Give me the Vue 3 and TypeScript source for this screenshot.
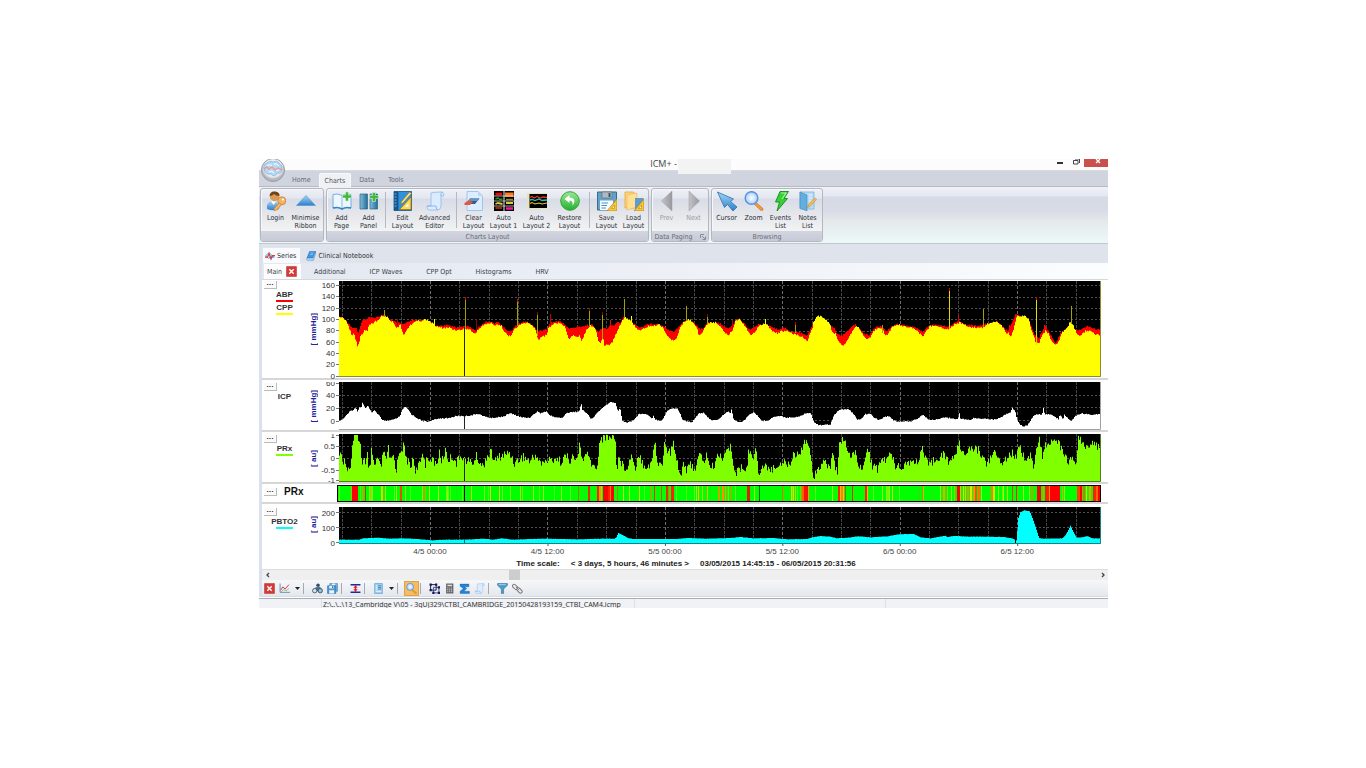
<script setup lang="ts">
type Point = [number, number]
interface Tick { label: string; y: number }
interface Spike { x: number; y: number; base: number; color: string; tip?: string }
interface RibbonButton { id: string; label: string; size: string; off?: boolean }
interface RibbonGroup { caption: string; launcher?: boolean; items: (RibbonButton | null)[] }

const PLOT_W = 762
/* Traces are stored in three sections, on a grid of one third of a unit. */
const SECTION_START = [-83, 201, 481]

function parse(sections: string[], shift: number): Point[] {
  const out: Point[] = []
  sections.forEach((s, i) => {
    for (const pair of s.trim().split(/\s+/)) {
      const [a, b] = pair.split(',').map(Number)
      const x = a / 3 + SECTION_START[i]
      if (out.length && x <= out[out.length - 1][0]) continue
      out.push([x, b / 3 + shift])
    }
  })
  return out
}

function noise(n: number): number {
  const v = Math.sin(n * 12.9898) * 43758.5453
  return (v - Math.floor(v)) * 2 - 1
}

function area(points: Point[], bottom: number, jitter: number, seed: number): string {
  let d = `M0 ${bottom}`
  let k = 0
  for (let x = 0; x <= PLOT_W; x++) {
    while (k < points.length - 2 && points[k + 1][0] < x) k++
    const [x0, y0] = points[k]
    const [x1, y1] = points[k + 1]
    const t = Math.min(1, Math.max(0, (x - x0) / (x1 - x0)))
    const y = Math.max(1, y0 + (y1 - y0) * t + noise(x + seed) * jitter)
    d += `V${y.toFixed(1)}H${x + 1}`
  }
  return d + `V${bottom}Z`
}

const cpp = parse([
  '250,125 258,122 265,130 275,148 283,168 286,183 292,168 296,188 300,195 304,213 308,200 312,182 320,172 325,160 332,165 340,142 348,145 356,136 365,134 372,122 385,118 392,122 400,132 412,140 420,155 432,148 437,165 442,175 450,165 458,150 468,145 475,135 485,134 495,135 505,130 515,132 525,140 540,152 560,156 580,155 590,160 605,163 625,158 640,160 650,170 655,175 665,160 680,148 695,142 705,142 712,148 722,145 735,150 745,168 755,180 762,180 770,165 785,150 800,142 812,140 825,148 835,155 843,185 848,193 852,182 870,178',
  '0,178 8,175 14,180 20,170 25,155 40,143 55,140 70,148 78,165 85,188 95,180 100,178 110,182 118,178 124,195 130,180 138,160 150,148 162,155 168,170 175,198 182,200 186,175 192,207 205,207 215,200 222,185 230,165 237,150 245,135 253,122 262,128 272,138 282,148 292,160 300,165 310,158 325,150 340,150 355,145 368,155 378,175 388,188 398,195 408,185 420,155 430,138 445,130 460,140 470,158 475,178 485,170 497,148 510,138 525,140 540,150 555,172 563,178 575,165 585,135 595,128 605,138 615,152 625,168 632,180 645,165 655,148 670,143 682,148 695,165 710,172 725,165 740,165 750,172 765,175 780,180 795,190 800,195 808,175 815,160 820,135 830,122 840,120 855,130 865,140 870,148',
  '0,122 15,130 25,145 33,165 38,172 45,172 50,185 58,202 68,207 80,195 90,175 100,160 108,150 118,158 128,178 140,192 150,185 160,165 172,155 185,155 195,180 205,172 215,152 230,146 250,150 265,153 285,160 297,172 308,180 318,165 328,150 345,150 365,155 380,160 390,155 405,143 420,140 435,148 455,155 485,155 500,145 515,138 530,138 545,150 553,165 560,175 566,170 572,182 580,160 590,115 600,122 612,120 625,130 632,160 640,180 645,198 655,203 665,175 675,165 685,175 695,198 706,207 715,195 725,170 740,155 748,140 757,145 768,172 780,180 795,165 810,165 825,175 843,178',
], -5)

const abp = parse([
  '250,122 260,125 275,140 287,155 300,155 305,175 312,150 320,130 330,130 340,122 355,125 372,120 385,118 400,130 410,135 425,140 440,145 455,138 470,132 485,134 505,130 525,140 540,150 560,148 580,148 605,155 625,150 640,152 655,163 665,155 680,142 700,135 712,142 725,138 740,152 755,165 765,165 775,150 800,138 815,138 830,150 843,165 870,160',
  '0,162 20,158 30,140 55,135 70,142 85,158 100,155 120,152 140,148 155,145 165,160 175,165 190,155 200,160 210,145 220,150 232,138 240,140 250,122 270,136 290,150 300,155 320,145 350,143 370,150 385,162 400,167 415,152 430,137 445,130 460,140 470,150 480,160 490,155 500,138 540,142 555,155 565,158 575,148 590,128 610,140 625,160 640,155 655,145 690,150 710,160 735,155 750,168 775,168 800,178 812,155 820,135 840,120 870,150',
  '0,122 30,155 42,155 50,175 65,178 80,165 100,148 115,155 130,172 145,178 165,155 180,150 200,165 215,150 230,144 280,153 308,167 325,148 345,146 385,152 415,135 435,145 470,150 500,143 530,136 550,155 562,165 575,140 585,115 600,120 625,128 640,172 655,187 665,165 675,150 690,175 706,202 720,172 740,155 748,140 765,160 780,162 800,150 820,158 843,162',
], -5)

const icp = parse([
  '250,435 258,430 270,418 282,405 290,402 296,396 300,400 304,408 308,392 314,396 318,380 322,385 326,398 334,388 340,400 346,412 354,402 362,412 370,420 376,432 390,436 405,432 420,428 432,418 438,400 446,393 455,400 465,415 480,425 495,434 515,437 530,432 550,427 575,427 600,420 625,420 645,418 665,413 685,422 705,426 730,423 745,420 760,411 775,417 795,424 820,425 832,415 845,405 850,412 870,406',
  '0,410 12,408 25,416 45,424 65,426 78,412 90,408 105,408 118,404 122,380 126,402 138,410 150,427 158,427 170,410 185,397 200,385 212,378 225,380 232,405 236,400 240,402 246,435 260,440 280,432 295,415 308,412 325,418 335,428 338,418 345,430 360,435 370,425 380,405 395,397 412,398 420,415 425,430 440,437 455,438 465,425 475,412 488,410 500,422 515,433 530,433 545,420 560,407 570,410 574,398 578,428 590,437 605,438 615,430 628,413 640,410 652,420 665,435 685,433 700,422 720,420 740,425 760,424 780,420 800,410 812,412 820,438 835,447 860,446 870,445',
  '0,445 22,443 28,425 40,418 52,405 65,400 85,400 98,412 110,430 122,430 135,415 150,413 162,425 175,432 190,424 205,420 215,430 230,437 270,436 290,428 308,416 325,432 350,430 375,425 400,427 413,430 416,408 420,428 450,432 460,426 490,428 520,431 540,425 555,415 570,410 576,395 580,402 584,405 590,430 600,447 610,451 622,447 635,425 645,416 665,415 669,396 673,415 690,415 700,420 715,430 718,415 728,430 732,415 745,430 752,436 765,420 785,412 805,416 843,415',
], -106)

const prx = parse([
  '250,85 256,75 260,100 265,90 270,115 276,120 280,135 285,85 290,40 298,22 306,30 312,50 318,110 324,95 328,125 332,75 336,110 341,138 346,55 350,100 356,120 362,85 368,110 374,120 382,60 386,100 396,62 400,105 410,80 420,125 428,70 436,62 442,52 448,90 455,100 462,120 470,85 478,130 490,110 500,70 506,110 515,75 520,120 526,90 540,110 548,75 556,100 568,65 575,95 590,85 600,105 615,80 625,95 650,105 660,85 680,118 690,85 705,75 715,100 730,85 760,75 775,105 800,85 820,100 840,80 855,110 870,95',
  '0,95 20,100 45,90 60,100 75,85 90,95 100,90 112,95 118,40 124,95 140,80 150,100 165,125 172,110 176,40 185,30 200,25 225,28 229,140 234,90 240,95 250,120 260,115 275,80 285,120 295,75 310,110 325,115 335,95 345,40 350,105 365,110 372,50 380,65 390,75 400,45 408,85 415,120 420,145 430,100 440,130 450,110 465,120 478,80 490,100 500,80 510,120 520,115 535,75 545,90 555,70 570,60 578,100 588,135 605,120 618,125 625,70 632,60 638,90 648,65 655,140 665,120 680,115 700,125 715,105 735,100 745,115 760,75 775,80 785,55 797,30 806,60 815,120 820,145 830,120 850,105 870,115',
  '0,115 15,110 28,80 38,65 42,110 52,130 58,40 66,30 75,50 85,90 95,80 103,70 110,85 118,125 128,120 138,60 146,80 155,110 170,125 185,90 195,100 205,85 215,80 225,110 245,115 265,100 285,105 297,90 306,55 312,90 325,115 340,95 355,85 372,80 385,105 395,90 410,70 416,35 424,70 440,70 455,60 475,65 485,85 500,105 515,85 522,70 535,95 550,100 565,80 576,75 590,85 597,45 605,85 620,90 632,80 638,125 648,65 658,30 665,85 672,60 685,40 700,40 715,40 725,70 740,95 755,100 768,95 774,25 785,50 800,65 812,50 825,55 843,45',
], -6)

const pbto2 = parse([
  '250,335 310,335 320,331 360,329 400,332 440,331 480,333 530,337 560,335 625,335 680,332 710,335 735,331 770,335 855,332 870,332',
  '0,333 110,334 190,332 222,332 228,328 234,315 245,320 262,330 280,333 410,333 440,330 500,332 570,330 600,327 640,331 700,330 740,334 800,333 815,328 840,324 870,326',
  '0,325 50,331 80,329 115,325 150,328 200,325 235,319 280,318 300,328 330,331 375,323 380,327 400,324 450,326 500,326 550,327 575,331 582,335 583,345 587,345 590,320 594,270 600,253 612,247 628,250 638,275 648,305 656,330 670,332 725,331 735,322 742,310 750,293 757,308 768,328 785,328 800,324 815,331 843,331',
], -79)

const OLIVE = '#a5a200'
const spikes: Spike[] = [
  { x: 45, y: 29, base: 36, color: OLIVE },
  { x: 58, y: 38, base: 45, color: '#b00000' },
  { x: 95, y: 38, base: 46, color: '#ffff00' },
  { x: 126, y: 16, base: 48, color: OLIVE, tip: '#e00000' },
  { x: 137, y: 38, base: 50, color: '#900000' },
  { x: 178, y: 18, base: 45, color: OLIVE, tip: '#e00000' },
  { x: 198, y: 31, base: 55, color: OLIVE, tip: '#a00000' },
  { x: 211, y: 33, base: 45, color: '#c00000' },
  { x: 250, y: 27, base: 45, color: OLIVE, tip: '#a00000' },
  { x: 263, y: 31, base: 58, color: OLIVE, tip: '#a00000' },
  { x: 271, y: 39, base: 60, color: '#ff0000' },
  { x: 285, y: 18, base: 37, color: OLIVE },
  { x: 292, y: 35, base: 42, color: '#ffff00' },
  { x: 347, y: 25, base: 40, color: OLIVE },
  { x: 368, y: 33, base: 44, color: OLIVE, tip: '#a00000' },
  { x: 393, y: 39, base: 48, color: '#c00000' },
  { x: 426, y: 38, base: 44, color: '#ffff00' },
  { x: 456, y: 41, base: 52, color: OLIVE, tip: '#c00000' },
  { x: 516, y: 43, base: 46, color: '#ff0000' },
  { x: 543, y: 44, base: 52, color: OLIVE },
  { x: 610, y: 7, base: 48, color: '#e0dc00', tip: '#e00000' },
  { x: 619, y: 34, base: 42, color: '#e00000' },
  { x: 644, y: 28, base: 46, color: OLIVE },
  { x: 670, y: 44, base: 54, color: '#ff0000' },
  { x: 697, y: 16, base: 64, color: '#e0dc00', tip: '#e00000' },
  { x: 705, y: 44, base: 52, color: '#ff0000' },
  { x: 732, y: 25, base: 43, color: OLIVE },
]

const vlines = Array.from({ length: 26 }, (_, k) => ({ x: Math.round(3 + k * 29.35), major: k % 4 === 3 }))

const charts = [
  {
    id: 'pressure', rowClass: 'row-tall', unit: '[ mmHg]', h: 96,
    legend: [{ name: 'ABP', color: '#ff0000' }, { name: 'CPP', color: '#ffff00' }],
    ticks: [160, 140, 120, 100, 80, 60, 40, 20, 0].map((v, i) => ({ label: String(v), y: 5 + Math.round(i * 11.35) })) as Tick[],
    grid: [4, 16, 27, 38, 50],
    areas: [{ d: area(abp, 96, 0.7, 5), fill: '#ff0000' }, { d: area(cpp, 96, 0.9, 91), fill: '#ffff00' }],
    spikes, gap: 46, floor: '#8c8c30',
  },
  {
    id: 'icp', rowClass: 'row-mid', unit: '[ mmHg]', h: 48,
    legend: [{ name: 'ICP', color: 'transparent' }],
    ticks: [{ label: '60', y: 1 }, { label: '40', y: 13 }, { label: '20', y: 26 }, { label: '0', y: 39 }] as Tick[],
    grid: [13, 25, 38],
    areas: [{ d: area(icp, 48, 0.5, 17), fill: '#ffffff' }],
    spikes: [] as Spike[], gap: 34, floor: '#a0a0a0',
  },
  {
    id: 'prx', rowClass: 'row-mid', unit: '[ au]', h: 48,
    legend: [{ name: 'PRx', color: '#80ff00' }],
    ticks: [{ label: '1', y: 1 }, { label: '0.5', y: 12 }, { label: '0', y: 24 }, { label: '-0.5', y: 36 }, { label: '-1', y: 46 }] as Tick[],
    grid: [12, 24, 36],
    areas: [{ d: area(prx, 48, 4.6, 33), fill: '#80ff00' }],
    spikes: [] as Spike[], gap: 24, floor: '#4f7f20',
  },
]

const oxygen = {
  ticks: [{ label: '200', y: 9 }, { label: '100', y: 24 }, { label: '0', y: 39 }] as Tick[],
  d: area(pbto2, 37, 0.1, 3),
}

/* [start, width, color] */
const bands: [number, number, string][] = [
  [13, 6, '#ff0000'], [12, 1, '#a0c000'], [23, 1, '#ff9000'], [26, 1, '#d83000'], [30, 1, '#80ff00'], [31, 1, '#c0c000'], [42, 1, '#d0e000'], [43, 1, '#ffc000'], [46, 1, '#b0f000'], [57, 1, '#a0ff00'], [61, 2, '#e05000'], [66, 1, '#80ff00'],
  [83, 1, '#ffb000'], [86, 1, '#ff9000'], [90, 1, '#c0f000'], [99, 1, '#b0ff00'], [108, 1, '#90ff00'], [125, 1, '#000000'], [132, 1, '#c0e000'], [145, 1, '#80ff00'], [151, 1, '#c0ff00'], [160, 1, '#b0ff00'], [171, 1, '#80ff00'], [181, 1, '#c0e000'], [194, 1, '#a0ff00'], [204, 1, '#a0ff00'], [222, 1, '#90ff00'],
  [239, 1, '#a08000'], [249, 2, '#e03000'], [258, 2, '#ff2000'], [260, 2, '#ff9000'], [262, 1, '#60ff00'], [264, 5, '#ff0000'], [269, 2, '#ff2000'], [271, 1, '#ff8000'], [272, 3, '#ff0000'], [278, 1, '#a09000'], [284, 1, '#b0ff00'], [290, 1, '#a0ff00'], [300, 1, '#d0f000'],
  [312, 1, '#ff8000'], [315, 1, '#f03000'], [322, 1, '#c06000'], [327, 2, '#e03000'], [329, 1, '#b09000'], [332, 3, '#ff2000'], [357, 1, '#b0ff00'], [359, 1, '#ffc000'], [363, 1, '#b0e000'], [368, 1, '#ffb000'], [379, 2, '#d0a000'], [383, 2, '#ff9000'], [386, 1, '#c0c000'], [388, 1, '#d0a000'], [391, 1, '#ff8000'],
  [408, 3, '#e02000'], [415, 1, '#b0ff00'], [420, 1, '#006000'], [443, 1, '#ff6000'], [452, 1, '#c0f000'], [454, 1, '#ffd000'], [456, 1, '#c0e000'], [461, 1, '#ff9000'], [463, 2, '#ff6000'], [465, 4, '#ff1000'], [469, 1, '#ffa000'],
  [493, 1, '#a0ff00'], [499, 2, '#ff2000'], [501, 1, '#ffc000'], [502, 2, '#ff8000'], [504, 1, '#c0e000'], [506, 1, '#e04000'], [513, 1, '#e03000'], [526, 2, '#ff2000'], [528, 1, '#ffb000'], [543, 1, '#b0ff00'], [547, 1, '#80ff00'], [550, 1, '#a0ff00'], [553, 1, '#b0ff00'],
  [583, 1, '#ff7000'], [601, 1, '#b0ff00'], [604, 2, '#ffa000'], [608, 1, '#c0c000'], [612, 1, '#a0ff00'], [615, 1, '#c0c000'], [618, 3, '#ff0000'], [621, 1, '#ffb000'], [624, 1, '#d0f000'], [626, 1, '#ffc000'], [628, 2, '#ff9000'], [631, 2, '#d0f000'], [634, 2, '#ff9000'], [636, 2, '#ff5000'], [639, 2, '#ff7000'], [642, 1, '#d0e000'],
  [652, 2, '#ff8000'], [654, 2, '#c0f000'], [659, 1, '#a0ff00'], [664, 1, '#b0ff00'], [668, 1, '#c0e000'], [673, 1, '#ff3000'], [677, 1, '#ff2000'], [684, 1, '#a0ff00'], [691, 1, '#c0a000'], [694, 1, '#c0a000'], [698, 4, '#ff0000'], [704, 1, '#ff9000'], [706, 4, '#ff2000'], [710, 1, '#ff9000'], [711, 10, '#ff0000'], [723, 1, '#ffa000'], [725, 1, '#80ff00'],
  [738, 3, '#ff4000'], [741, 2, '#ff0000'], [744, 2, '#ff6000'], [747, 1, '#c0f000'], [750, 2, '#ffa000'], [754, 3, '#ff2000'], [757, 2, '#ff6000'], [759, 2, '#ff0000'],
]
const shades = Array.from({ length: 90 }, (_, i) => ({
  x: Math.floor((noise(i * 3 + 7) + 1) * 380),
  color: noise(i) > 0.3 ? '#50ff00' : noise(i) > -0.4 ? '#20e810' : '#60ff10',
}))

const times = ['4/5 00:00', '4/5 12:00', '5/5 00:00', '5/5 12:00', '6/5 00:00', '6/5 12:00']
  .map((label, i) => ({ label, left: `${11.95 + i * 15.41}%` }))

const ribbon: RibbonGroup[] = [
  { caption: '', items: [{ id: 'login', label: 'Login', size: 's' }, { id: 'minimise', label: 'Minimise Ribbon', size: 'm' }] },
  {
    caption: 'Charts Layout',
    items: [
      { id: 'addPage', label: 'Add Page', size: 's' }, { id: 'addPanel', label: 'Add Panel', size: 's' }, null,
      { id: 'edit', label: 'Edit Layout', size: 's' }, { id: 'scroll', label: 'Advanced Editor', size: 'l' }, null,
      { id: 'clear', label: 'Clear Layout', size: 's' }, { id: 'auto1', label: 'Auto\nLayout 1', size: 'm' },
      { id: 'auto2', label: 'Auto\nLayout 2', size: 'm' }, { id: 'restore', label: 'Restore Layout', size: 'm' }, null,
      { id: 'save', label: 'Save Layout', size: 's' }, { id: 'load', label: 'Load Layout', size: 's' },
    ],
  },
  { caption: 'Data Paging', launcher: true, items: [{ id: 'prev', label: 'Prev', size: 's', off: true }, { id: 'next', label: 'Next', size: 's', off: true }] },
  {
    caption: 'Browsing',
    items: [{ id: 'cursor', label: 'Cursor', size: 's' }, { id: 'zoom', label: 'Zoom', size: 's' }, { id: 'events', label: 'Events List', size: 's' }, { id: 'notes', label: 'Notes List', size: 's' }],
  },
]

const ruler = '<path d="M20 8V20H10Z" fill="#f6c83c" stroke="#b98410" stroke-width=".8"/><path d="M17.500 14V17.500H14.500Z" fill="#fff3c0" stroke="#b98410" stroke-width=".6"/>'
const icons: Record<string, string> = {
  login: '<path d="M1 18C0 12 4 10 7 10S14 12 13 18Q7 20.500 1 18Z" fill="url(#gBlue)"/><path d="M5 10L7.500 14L10 10.500Z" fill="#fff"/><circle cx="8.500" cy="5.500" r="4.700" fill="#d99a55"/><path d="M3.500 5Q4 0 9 .5T13.500 5Q10 5 8 3Q6 5 3.500 5Z" fill="#70421a"/><circle cx="15.800" cy="9.800" r="4" fill="#f5b565" stroke="#c67d2d" stroke-width=".8"/><path d="M13.500 12L8 17.500L8.500 19.500L11 19L15.500 13.500Z" fill="#f5b565" stroke="#c67d2d" stroke-width=".7"/><circle cx="17" cy="8.500" r="1.100" fill="#fff"/>',
  minimise: '<path d="M10 4.500L19.500 14.500H.5Z" fill="url(#gBlue)" stroke="#5d98d2" stroke-width=".7"/>',
  addPage: '<path d="M1 3.500Q6 2 10 4.500Q14 2 19 3.500V17Q14 15.500 10 18Q6 15.500 1 17Z" fill="#eef7ff" stroke="#6db0df"/><path d="M10 4.500V18" stroke="#88bfe5"/><path d="M1 17Q6 15.500 10 18Q14 15.500 19 17" stroke="#2f87c8" stroke-width="1.600" fill="none"/><path d="M13.500 1H16.500V4H19.500V7H16.500V10H13.500V7H10.500V4H13.500Z" fill="#42b83e" stroke="#d8f3d4" stroke-width=".6"/>',
  addPanel: '<path d="M1 3H8.500V18H1Z" fill="url(#gTeal)" stroke="#2c658b" stroke-width=".7"/><path d="M11 3H18.500V18H11Z" fill="url(#gTeal)" stroke="#2c658b" stroke-width=".7"/><path d="M13.500 1.500H16.500V4.500H19.500V7.500H16.500V10.500H13.500V7.500H10.500V4.500H13.500Z" fill="#42b83e" stroke="#d8f3d4" stroke-width=".6"/>',
  edit: '<path d="M1 .5H18.500V19.500H1Z" fill="#2f93dc" stroke="#11578f" stroke-width=".8"/><path d="M1 .5H5.500V19.500H1Z" fill="#15568f"/><path d="M1.500 3H3.500M1.500 6H3.500M1.500 9H3.500M1.500 12H3.500M1.500 15H3.500" stroke="#8cc4ef" stroke-width=".8"/><path d="M18 6V18.500H6.500Z" fill="#ffd84d" stroke="#a66f08" stroke-width=".8"/><path d="M15.500 12V16H11.500Z" fill="#e9f4ff"/><path d="M16.500 1L18.500 2.500L10 12L7.500 13L8.500 10.500Z" fill="#ffe07a" stroke="#8c6818" stroke-width=".6"/>',
  scroll: '<path d="M6 2Q9 1 17 1Q20 2 18.500 5H16V15Q16 19 12 19H4Q1 18 2 15H6Z" fill="#dcecff" stroke="#96bdec" stroke-width=".9"/><path d="M16 5Q15 2 17.500 1M2 15H11Q11 19 13 19" fill="none" stroke="#83afe5" stroke-width=".9"/>',
  clear: '<path d="M3 .5H14L18.500 5V19.500H3Z" fill="#dcedff" stroke="#8fbdec" stroke-width=".8"/><path d="M14 .5V5H18.500" fill="#b8d9f5"/><path d="M6 7.500H15.500L11 13H2Z" fill="#315f8a"/><path d="M6 7.500H15.500L13.500 10H4Z" fill="#6d93b8"/><path d="M4.500 9.500L.5 12V14H6L9 11Z" fill="#e5563c"/>',
  auto1: '<path d="M0 0H9.500V20H0ZM10.500 0H20V20H10.500Z" fill="#000"/><path d="M1.500 3H8" stroke="#f00" stroke-width="2.500"/><path d="M11 1.500H19.500V6H11Z" fill="#ff7a24"/><path d="M1.500 8L4 7L6 8.500L8.500 8" stroke="#269b36" stroke-width="1.500" fill="none"/><path d="M1.500 13L4 12L8.500 13M12 12H19" stroke="#dbcc32" stroke-width="1.800" fill="none"/><path d="M12 17.500H19" stroke="#f219a0" stroke-width="2.500"/><path d="M1.500 17H8" stroke="#dc2c1b" stroke-width="1.500"/><path d="M12 8.500H19" stroke="#888c37" stroke-width="1.500"/><path d="M0 5H20M0 10H20M0 15H20" stroke="#e7e9d8" stroke-width=".7"/>',
  auto2: '<path d="M0 2H20V18H0Z" fill="#e8e4b9"/><path d="M2.500 3H20V17H2.500Z" fill="#000"/><path d="M3 6.500L5 5.500L7 7L10 5.500L13 7L16 6L20 6.500" fill="none" stroke="#e83430" stroke-width="1.300"/><path d="M3 9L5 8.500L8 9.500L12 8L15 9.500L20 9" fill="none" stroke="#35b8ad" stroke-width="1.300"/><path d="M3 12.500L5 11.500L8 13L12 12L15 13L20 12" fill="none" stroke="#d8c929" stroke-width="1.100"/>',
  restore: '<circle cx="10" cy="10" r="9.300" fill="url(#gGreen)" stroke="#32a438"/><path d="M9.500 4L4.500 8L9.500 12V9.500Q13.500 9.500 12.500 15Q17.500 7 9.500 6.500Z" fill="#fff"/>',
  save: '<path d="M.5 1H19.500V19H.5Z" fill="#66a2c6" stroke="#396b8b"/><path d="M5 1H15V7H5Z" fill="#aeb9c1" stroke="#536878" stroke-width=".6"/><path d="M11.500 2H13.500V6H11.500Z" fill="#375b72"/><path d="M3 9.500H16V19H3Z" fill="#f5fbff"/><path d="M4.500 12H11M4.500 14.500H10M4.500 17H9" stroke="#4d91c3"/>' + ruler,
  load: '<path d="M1 1H9L12 3V17H1Z" fill="#ffd576" stroke="#df9d33" stroke-width=".7"/><path d="M3 4L13 2V16L3 19Z" fill="#ffdf94" stroke="#e8ac4c" stroke-width=".5"/><path d="M11 7H19.500V19H11Z" fill="#5f9ccb"/>' + ruler,
  prev: '<path d="M15 0V20L4.500 10Z" fill="url(#gGrey)" stroke="#9e9ea3" stroke-width=".5"/>',
  next: '<path d="M5 0V20L15.500 10Z" fill="url(#gGrey)" stroke="#9e9ea3" stroke-width=".5"/>',
  cursor: '<path d="M.5 1L16.500 8L13.500 10.500L20 16L16 20L10.500 13.500L7.500 16.500Z" fill="url(#gBlue)" stroke="#2c6fb1" stroke-width=".8"/>',
  zoom: '<path d="M11.500 11L19 17.500Q19.500 20 17 19.500L10 13Z" fill="#f39a3c" stroke="#c06f20" stroke-width=".6"/><circle cx="7.500" cy="7" r="6.300" fill="url(#gLens)" stroke="#5b93e0" stroke-width="1.500"/>',
  events: '<path d="M9 .5H17.500L13 7.500H16.500L6 20L8.500 11H4.500Z" fill="#36cf36" stroke="#148a1a" stroke-width=".9"/><path d="M10 2H15L11 8" fill="none" stroke="#a7f5a0" stroke-width="1.200"/>',
  notes: '<path d="M2 1H16V18H2Z" fill="#b9dcf5" stroke="#7bb2da" stroke-width=".8"/><path d="M2 1L9 4V20L2 17Z" fill="#62aede" stroke="#4a8fc2" stroke-width=".7"/><path d="M11 4H14M11 7H14M11 10H14M11 13H14" stroke="#edf7fe"/><path d="M16.500 7L18.500 8.500L12 15.500L9.500 16.500L10 14Z" fill="#f2ba5b" stroke="#b87f31" stroke-width=".5"/>',
  book: '<path d="M7 1H19L14 14H2Z" fill="#3f96e2" stroke="#2469ad"/><path d="M2 14Q0 18 3 18.500H15L19 6V1L14 14Z" fill="#b9dcf8" stroke="#397ebd"/><path d="M9 4H15M8 7H14" stroke="#b9def9"/>',
  pulse: '<path d="M1 10L8 3L13 8L8 15Z" fill="none" stroke="#4fb4bd" stroke-width="2"/><path d="M0 12H5L8 5L12 16L15 9H20" fill="none" stroke="#d63c4c" stroke-width="2.500"/><path d="M12 12H19" stroke="#4f5da8" stroke-width="2"/>',
  close: '<path d="M1 1H19V19H1Z" fill="#d63a37" stroke="#b02c29"/><path d="M6 6L14 14M14 6L6 14" stroke="#fff" stroke-width="2.500"/>',
  chart: '<path d="M2 1V17H20" fill="none" stroke="#5c7fa8" stroke-width="1.500"/><path d="M3 13L7 7L11 11L18 3" fill="none" stroke="#d33d48" stroke-width="1.800"/><path d="M4 16L8 12L13 14L18 10" fill="none" stroke="#68a667" stroke-width="1.200"/>',
  users: '<circle cx="11" cy="4" r="3.200" fill="#344e69"/><path d="M4 15Q4 7 11 7T18 15Z" fill="#5a7187"/><circle cx="5" cy="14" r="4" fill="#d5e7f4" stroke="#294968" stroke-width="1.500"/><circle cx="15" cy="14" r="4" fill="#9bbbd0" stroke="#294968" stroke-width="1.500"/>',
  disks: '<path d="M5 1H19V15H5Z" fill="#77b4df" stroke="#3279b0"/><path d="M9 1H15V4H9Z" fill="#e8f5ff"/><path d="M1 5H16V19H1Z" fill="#4a96cf" stroke="#2a6ba0"/><path d="M4 5H12V10H4ZM4 13H13V19H4Z" fill="#e8f5ff"/><path d="M9 6H11V9H9Z" fill="#386484"/>',
  ibeam: '<path d="M1 3H19M1 17H19" stroke="#1b2ca0" stroke-width="2.800"/><path d="M10 4V16" stroke="#e01c24" stroke-width="2.500"/><path d="M6 8.500L10 4.500L14 8.500ZM6 11.500L10 15.500L14 11.500Z" fill="#e01c24"/>',
  list: '<path d="M3 1H17V19H3Z" fill="#9ed2f2" stroke="#478bbd"/><path d="M5 5H8M5 8H8M5 11H8M5 15H15" stroke="#fff" stroke-width="1.500"/><path d="M9 5H15M9 8H15M9 11H15" stroke="#3c7daf" stroke-width="1.500"/>',
  crop: '<path d="M3 3H13V13H3Z" fill="none" stroke="#17174c" stroke-width="1.800"/><path d="M8 8H18V18H8Z" fill="none" stroke="#3d4aa5" stroke-width="1.800"/><path d="M1 1H5V5H1ZM11 1H15V5H11ZM1 11H5V15H1ZM16 6H20V10H16ZM16 16H20V20H16ZM6 16H10V20H6Z" fill="#17174c"/>',
  calc: '<path d="M4 1H17V19H4Z" fill="#575757"/><path d="M6 3H15V6H6Z" fill="#dedede"/><path d="M6 9H15M6 12.500H15M6 16H15" stroke="#e8e8e8" stroke-width="2" stroke-dasharray="2 1.500"/>',
  sigma: '<path d="M2 2H18V7H10L14 10L9 15H19V19H2V15L8 10L2 6Z" fill="#2281db" stroke="#125ba5" stroke-width=".7"/>',
  filter: '<path d="M1 1H19V4L12 11V19H8V11L1 4Z" fill="#4a9acb" stroke="#2d6b95"/><path d="M3 3H16" stroke="#b5dff3" stroke-width="1.500"/>',
  link: '<g fill="#eee" stroke="#777" stroke-width="1.800"><rect x="1" y="4" width="11" height="6" rx="3" transform="rotate(45 6 6)"/><rect x="8" y="11" width="11" height="6" rx="3" transform="rotate(45 14 14)"/></g><path d="M7 7L13 13" stroke="#8a8a8a" stroke-width="1.800"/>',
}

const pages = ['Additional', 'ICP Waves', 'CPP Opt', 'Histograms', 'HRV']
const tools = ['close', 'chart', 'caret', '|', 'users', 'disks', '|', 'ibeam', '|', 'list', 'caret', '|', 'zoom', '|', 'crop', 'calc', 'sigma', 'scroll', '|', 'filter', 'link']
</script>

<template>
  <div class="desk">
    <svg class="defs" aria-hidden="true">
      <defs>
        <linearGradient id="gBlue" x1="0" y1="0" x2="0" y2="1"><stop offset="0" stop-color="#a5d5f7" /><stop offset="1" stop-color="#2c7fca" /></linearGradient>
        <linearGradient id="gTeal"><stop offset="0" stop-color="#7fc0dd" /><stop offset="1" stop-color="#256b96" /></linearGradient>
        <linearGradient id="gGreen" x1="0" y1="0" x2="0" y2="1"><stop offset="0" stop-color="#9be895" /><stop offset="1" stop-color="#22b12e" /></linearGradient>
        <linearGradient id="gGrey"><stop offset="0" stop-color="#c4c4c8" /><stop offset="1" stop-color="#97979d" /></linearGradient>
        <radialGradient id="gLens"><stop offset="0" stop-color="#ffffff" /><stop offset="1" stop-color="#a5cffa" /></radialGradient>
        <radialGradient id="gOrb" cy="0.4"><stop offset="0" stop-color="#ffffff" /><stop offset="0.8" stop-color="#e6e8ec" /><stop offset="1" stop-color="#b4b7be" /></radialGradient>
      </defs>
    </svg>

    <main class="window">
      <header class="titlebar">
        <h1>ICM+ -</h1>
        <span class="patch"></span>
        <div class="controls">
          <button type="button" aria-label="Minimise window"><svg width="6" height="6"><path d="M0 3H6V5H0Z" fill="#333" /></svg></button>
          <button type="button" aria-label="Restore window"><svg width="7" height="6"><path d="M2 0H6.500V4M.5 1.500H5V5H.5Z" fill="none" stroke="#444" /></svg></button>
          <button type="button" class="shut" aria-label="Close window"><svg width="6" height="6"><path d="M1 0L5 4M5 0L1 4" stroke="#fff" stroke-width="1.300" /></svg></button>
        </div>
      </header>

      <button type="button" class="orb" aria-label="Application menu">
        <svg viewBox="0 0 24 24">
          <circle cx="12" cy="12" r="11.500" fill="url(#gOrb)" stroke="#9a9da6" />
          <path d="M3 11Q2 6 6 5Q9 2 12 4Q16 2 18 5Q22 8 21 12Q20 16 16 15Q14 20 10 16Q4 17 3 11Z" fill="#b4d9f5" stroke="#85b4dc" stroke-width=".8" />
          <path d="M6 8Q9 5 11 8M13 6Q16 5 18 8M8 14Q11 12 13 15M15 12Q17 13 19 11" stroke="#fff" fill="none" />
          <path d="M3 11L6 9L8 11L11 9L14 12L17 10L21 12" stroke="#e79a9a" stroke-width="1.500" fill="none" />
        </svg>
      </button>

      <nav class="tabs" aria-label="Ribbon">
        <button v-for="t in ['Home', 'Charts', 'Data', 'Tools']" :key="t" type="button" :class="{ on: t === 'Charts' }">{{ t }}</button>
      </nav>

      <section class="ribbon">
        <div v-for="(g, gi) in ribbon" :key="gi" class="group">
          <div class="items">
            <template v-for="(b, i) in g.items" :key="i">
              <button v-if="b" type="button" class="big" :class="b.size" :disabled="b.off">
                <svg viewBox="0 0 20 20" v-html="icons[b.id]"></svg>
                <span>{{ b.label }}</span>
              </button>
              <i v-else class="rule"></i>
            </template>
          </div>
          <footer>
            {{ g.caption }}
            <svg v-if="g.launcher" width="6" height="6"><path d="M.5 4V.5H4M2 2L5 5M5.500 2.500V5.500H2.500" fill="none" stroke="#777c88" stroke-width=".8" /></svg>
          </footer>
        </div>
      </section>

      <div class="body">
        <nav class="views" aria-label="Views">
          <button type="button" class="on"><svg viewBox="0 0 20 20" v-html="icons.pulse"></svg>Series</button>
          <button type="button"><svg viewBox="0 0 20 20" v-html="icons.book"></svg>Clinical Notebook</button>
        </nav>
        <nav class="pages" aria-label="Pages">
          <div class="current">
            <button type="button">Main</button>
            <button type="button" aria-label="Close page"><svg viewBox="0 0 20 20" v-html="icons.close"></svg></button>
          </div>
          <button v-for="p in pages" :key="p" type="button">{{ p }}</button>
        </nav>

        <section v-for="c in charts" :key="c.id" class="row" :class="c.rowClass">
          <div class="legend">
            <button type="button" class="more" aria-label="Options">•••</button>
            <span v-for="l in c.legend" :key="l.name" class="name">{{ l.name }}<i :style="{ background: l.color }"></i></span>
          </div>
          <div class="unit"><span>{{ c.unit }}</span></div>
          <svg class="axis">
            <g v-for="t in c.ticks" :key="t.label">
              <text x="15" :y="t.y + 3">{{ t.label }}</text>
              <path :d="`M16 ${t.y}H19V${t.y + 1}H16Z`" fill="#777" />
            </g>
          </svg>
          <svg class="plot" :viewBox="`0 0 762 ${c.h}`" preserveAspectRatio="none">
            <path v-for="v in vlines" :key="v.x" :d="`M${v.x + .5} 0V${c.h}`" :class="v.major ? 'major' : 'minor'" />
            <path v-for="y in c.grid" :key="y" :d="`M0 ${y + .5}H762`" class="level" />
            <path v-for="(a, i) in c.areas" :key="i" :d="a.d" :fill="a.fill" />
            <g v-for="s in c.spikes" :key="s.x" shape-rendering="crispEdges">
              <rect :x="s.x" :y="s.y" width="1" :height="s.base - s.y" :fill="s.color" />
              <rect v-if="s.tip" :x="s.x" :y="s.y" width="1" height="3" :fill="s.tip" />
            </g>
            <rect x="125" :y="c.gap" width="1" :height="c.h - c.gap" fill="#222" />
            <path :d="`M0 ${c.h - .5}H761.500V0`" fill="none" :stroke="c.floor" />
          </svg>
        </section>

        <section class="row row-strip">
          <div class="legend strip-name">
            <button type="button" class="more" aria-label="Options">•••</button>
            <strong>PRx</strong>
          </div>
          <svg class="strip" viewBox="-2 0 764 17" preserveAspectRatio="none" shape-rendering="crispEdges">
            <rect x="-2" width="764" height="17" fill="#000" />
            <rect x="-1" y="1" width="762" height="15" fill="#00ff00" />
            <rect v-for="(s, i) in shades" :key="'s' + i" :x="s.x" y="1" width="1" height="15" :fill="s.color" />
            <rect v-for="(b, i) in bands" :key="i" :x="b[0]" y="1" :width="b[1]" height="15" :fill="b[2]" />
          </svg>
        </section>

        <section class="row row-last">
          <div class="legend">
            <button type="button" class="more" aria-label="Options">•••</button>
            <span class="name">PBTO2<i class="cyan"></i></span>
          </div>
          <div class="unit"><span>[ au]</span></div>
          <svg class="axis">
            <g v-for="t in oxygen.ticks" :key="t.label">
              <text x="15" :y="t.y + 3">{{ t.label }}</text>
              <path :d="`M16 ${t.y - 1}H19V${t.y}H16Z`" fill="#777" />
            </g>
          </svg>
          <svg class="plot" viewBox="0 0 762 37" preserveAspectRatio="none">
            <path v-for="v in vlines" :key="v.x" :d="`M${v.x + .5} 0V37`" :class="v.major ? 'major' : 'minor'" />
            <path d="M0 5.500H762M0 20.500H762" class="level" />
            <path :d="oxygen.d" fill="#00ffff" />
            <rect x="125" y="32" width="1" height="5" fill="#066" />
            <path d="M0 36.500H761.500V0" fill="none" stroke="#1f7f7f" />
          </svg>
        </section>

        <svg class="times">
          <text v-for="t in times" :key="t.label" :x="t.left" y="10">{{ t.label }}</text>
          <rect v-for="t in times" :key="'m' + t.label" :x="t.left" width="1" height="2" fill="#555" />
        </svg>
        <p class="scale"><span>Time scale:</span><span>&lt; 3 days, 5 hours, 46 minutes &gt;</span><span>03/05/2015 14:45:15 - 06/05/2015 20:31:56</span></p>

        <div class="scroller">
          <button type="button" aria-label="Scroll left"><svg width="5" height="6"><path d="M4 1L2 3L4 5" fill="none" stroke="#444" stroke-width="1.300" /></svg></button>
          <div class="track"><i></i></div>
          <button type="button" aria-label="Scroll right"><svg width="5" height="6"><path d="M1 1L3 3L1 5" fill="none" stroke="#444" stroke-width="1.300" /></svg></button>
        </div>

        <div class="toolbar">
          <template v-for="(t, i) in tools" :key="i">
            <i v-if="t === '|'" class="rule"></i>
            <button v-else-if="t === 'caret'" type="button" class="caret" aria-label="More"><svg width="5" height="3"><path d="M0 0H5L2.500 3Z" fill="#222" /></svg></button>
            <button v-else type="button" :class="{ lit: t === 'zoom' }" :aria-label="t"><svg viewBox="0 0 20 20" v-html="icons[t]"></svg></button>
          </template>
        </div>
      </div>

      <footer class="status">
        <span class="cell lead"></span>
        <span class="cell path">Z:\..\..\13_Cambridge V\05 - 3gUj329\CTBI_CAMBRIDGE_20150428193159_CTBI_CAM4.icmp</span>
        <span class="cell mid"></span>
      </footer>
    </main>
  </div>
</template>

<style>
body { margin: 0; background: #fff; }
</style>

<style scoped>
* { box-sizing: border-box; }
.desk { padding: 159px 258px 0 259px; font: 7px/8px "DejaVu Sans Condensed", "DejaVu Sans", sans-serif; color: #333; }
.defs { position: absolute; width: 0; height: 0; }
button { border: 0; padding: 0; margin: 0; background: none; font: inherit; color: inherit; }
svg { display: block; flex: none; }
i { display: block; flex: none; }
.window { position: relative; overflow: hidden; background: #fff; }

.titlebar { display: flex; justify-content: center; height: 12px; background: #fcfcfc; border-bottom: 1px solid #d8dade; position: relative; }
.titlebar h1 { margin: 0; padding-right: 40px; font: 9px/10px "Open Sans", sans-serif; color: #444; }
.patch { position: absolute; z-index: 2; top: 0; left: 419px; width: 53px; height: 15px; background: #f3f3f3; }
.controls { position: absolute; right: 0; top: 0; display: flex; }
.controls button { width: 16px; height: 8px; display: flex; justify-content: center; }
.controls .shut { width: 24px; background: #c9504d; padding-left: 4px; }
.orb { position: absolute; z-index: 3; left: 2px; top: -1px; width: 24px; height: 24px; }

.tabs { display: flex; gap: 2px; height: 16px; padding: 2px 0 0 27px; background: #d0d4de; border-bottom: 1px solid #b6bac3; }
.tabs button { height: 14px; padding: 0 6px; color: #666b75; }
.tabs .on { background: #eef1f6; border: 1px solid #f8f9fb; border-bottom: 0; border-radius: 2px 2px 0 0; padding: 0 5px; color: #555; }

.ribbon { display: flex; gap: 2px; height: 57px; padding: 1px; background: linear-gradient(#eff1f6 0, #e4e8f1 9px, #d5dae6 10px, #d9dce6 24px, #e4e9ea 34px, #ecf7f7 54px); border-bottom: 1px solid #c3c6cd; }
.group { display: flex; flex-direction: column; border: 1px solid #b4b7c0; border-radius: 3px; overflow: hidden; background: linear-gradient(#eef0f5 0, #e4e7f0 9px, #d8dce7 10px, #e5e7eb 26px, #f2f3f4 42px); box-shadow: inset 1px 1px 0 #f6f7fa; }
.items { display: flex; flex: 1; padding: 2px 1px 0; }
.big { display: flex; flex-direction: column; align-items: center; justify-content: flex-start; width: 27px; }
.big.m { width: 33px; }
.big.l { width: 37px; }
.big svg { width: 20px; height: 20px; margin-bottom: 3px; }
.big span { white-space: pre-line; color: #2c2f3a; }
.big:disabled span { color: #9a9ca4; }
.items .rule { width: 1px; height: 36px; margin: 1px 3px 0; background: #b4b8c2; }
.group footer { display: flex; justify-content: center; align-items: center; gap: 7px; height: 10px; padding-top: 2px; color: #696d79; background: linear-gradient(#d3d6e0, #c6cad7); }

.body { border-left: 3px solid #dbe1ea; }
.views { display: flex; align-items: flex-end; height: 19px; padding-left: 1px; background: #dfe3ec; }
.views button { display: flex; align-items: center; gap: 2px; height: 15px; padding: 0 4px 0 2px; }
.views .on { background: #f8fafd; margin-right: 4px; }
.views svg { width: 10px; height: 10px; }
.pages { display: flex; align-items: center; gap: 24px; height: 17px; padding: 1px 0 0 2px; background: linear-gradient(90deg, #e3e8f1, #edf0f7 50%, #fcfdfe); border-bottom: 1px solid #d4d8df; color: #3b3d45; }
.current { display: flex; align-items: center; gap: 4px; height: 15px; width: 37px; margin-right: -11px; padding-left: 3px; background: #fdfdfe; }
.current svg { width: 11px; height: 11px; }

.row { display: flex; border-bottom: 2px solid #d6d6d6; padding-right: 7px; background: #fff; }
.row-tall { height: 100px; padding-top: 1px; }
.row-mid { height: 52px; padding-top: 2px; }
.legend { width: 45px; flex: none; display: flex; flex-direction: column; align-items: center; padding-top: 1px; }
.row-tall .legend { padding-top: 0; }
.more { align-self: flex-start; width: 13px; height: 8px; margin-left: 2px; background: #fafafa; border-right: 1px solid #bbb; border-bottom: 1px solid #bbb; font: 4px/6px "DejaVu Sans", sans-serif; color: #222; }
.name { display: flex; flex-direction: column; align-items: center; margin-top: 1px; font: bold 8px/10px "Liberation Sans", Arial, sans-serif; color: #333; }
.name + .name { margin-top: 1px; }
.name i { width: 17px; height: 2px; }
.name .cyan { background: #00ffff; }
.unit { width: 13px; flex: none; display: flex; align-items: center; justify-content: center; }
.unit span { writing-mode: vertical-rl; transform: rotate(180deg); font: bold 8px/9px "Liberation Sans", Arial, sans-serif; color: #22229a; white-space: nowrap; }
.axis { width: 19px; height: 50px; overflow: hidden; }
.row-tall .axis { margin-top: -1px; height: 100px; }
.axis text { text-anchor: end; font: 8px "Liberation Sans", Arial, sans-serif; fill: #333; }
.plot { flex: 1 1 0; width: 0; height: 48px; background: #000; }
.row-tall .plot { height: 96px; }
.plot .minor { stroke: #434343; stroke-dasharray: 3 1; }
.plot .major { stroke: #6c6c6c; stroke-dasharray: 3 2; }
.plot .level { stroke: #505050; stroke-dasharray: 2 2; }
.row-strip { height: 20px; }
.strip-name { width: 75px; flex-direction: row; gap: 7px; align-items: flex-start; padding-top: 4px; }
.strip-name strong { font: bold 10px/8px "Liberation Sans", Arial, sans-serif; color: #111; }
.strip { flex: 1 1 0; width: 0; height: 17px; margin-top: 1px; }
.row-last { height: 40px; border-bottom: 0; }
.row-last .plot { height: 37px; margin-top: 3px; }
.row-last .axis { height: 44px; }
.row-last .legend { padding-top: 4px; }
.times { width: calc(100% - 84px); height: 14px; margin: 0 7px 0 77px; overflow: visible; }
.times text { text-anchor: middle; font: 8px "Liberation Sans", Arial, sans-serif; fill: #444; }
.scale { display: flex; justify-content: center; gap: 11px; height: 12px; margin: 0; padding-left: 2px; font: bold 8px/11px "Liberation Sans", Arial, sans-serif; color: #222; border-bottom: 1px solid #dcdcdc; }

.scroller { display: flex; height: 10px; background: #efefef; }
.scroller button { width: 10px; display: flex; align-items: center; justify-content: center; }
.track { flex: 1; display: flex; padding-left: 28%; }
.track i { width: 11px; background: #cdcdcd; }
.toolbar { display: flex; align-items: center; height: 17px; background: linear-gradient(#f6f7f9, #e4e8ed); border-bottom: 1px solid #d8dbe0; }
.toolbar button { display: flex; align-items: center; justify-content: center; width: 15px; height: 15px; }
.toolbar button svg { width: 11px; height: 11px; }
.toolbar .caret { width: 10px; }
.toolbar .caret svg { width: 5px; height: 3px; }
.toolbar .lit { background: #f5bd62; border: 1px solid #e3a048; }
.toolbar .rule { width: 1px; height: 11px; margin: 0 6px 0 1px; background: #a5aab2; }

.status { display: flex; height: 10px; margin-top: 1px; border-top: 1px solid #a9adb5; background: #f0f2f5; overflow: hidden; font: 7px/12px "Noto Sans", sans-serif; color: #333; }
.cell { border-right: 1px solid #dcdfe4; white-space: nowrap; }
.lead { width: 63px; }
.path { width: 313px; padding-left: 1px; }
.mid { width: 251px; }
</style>
